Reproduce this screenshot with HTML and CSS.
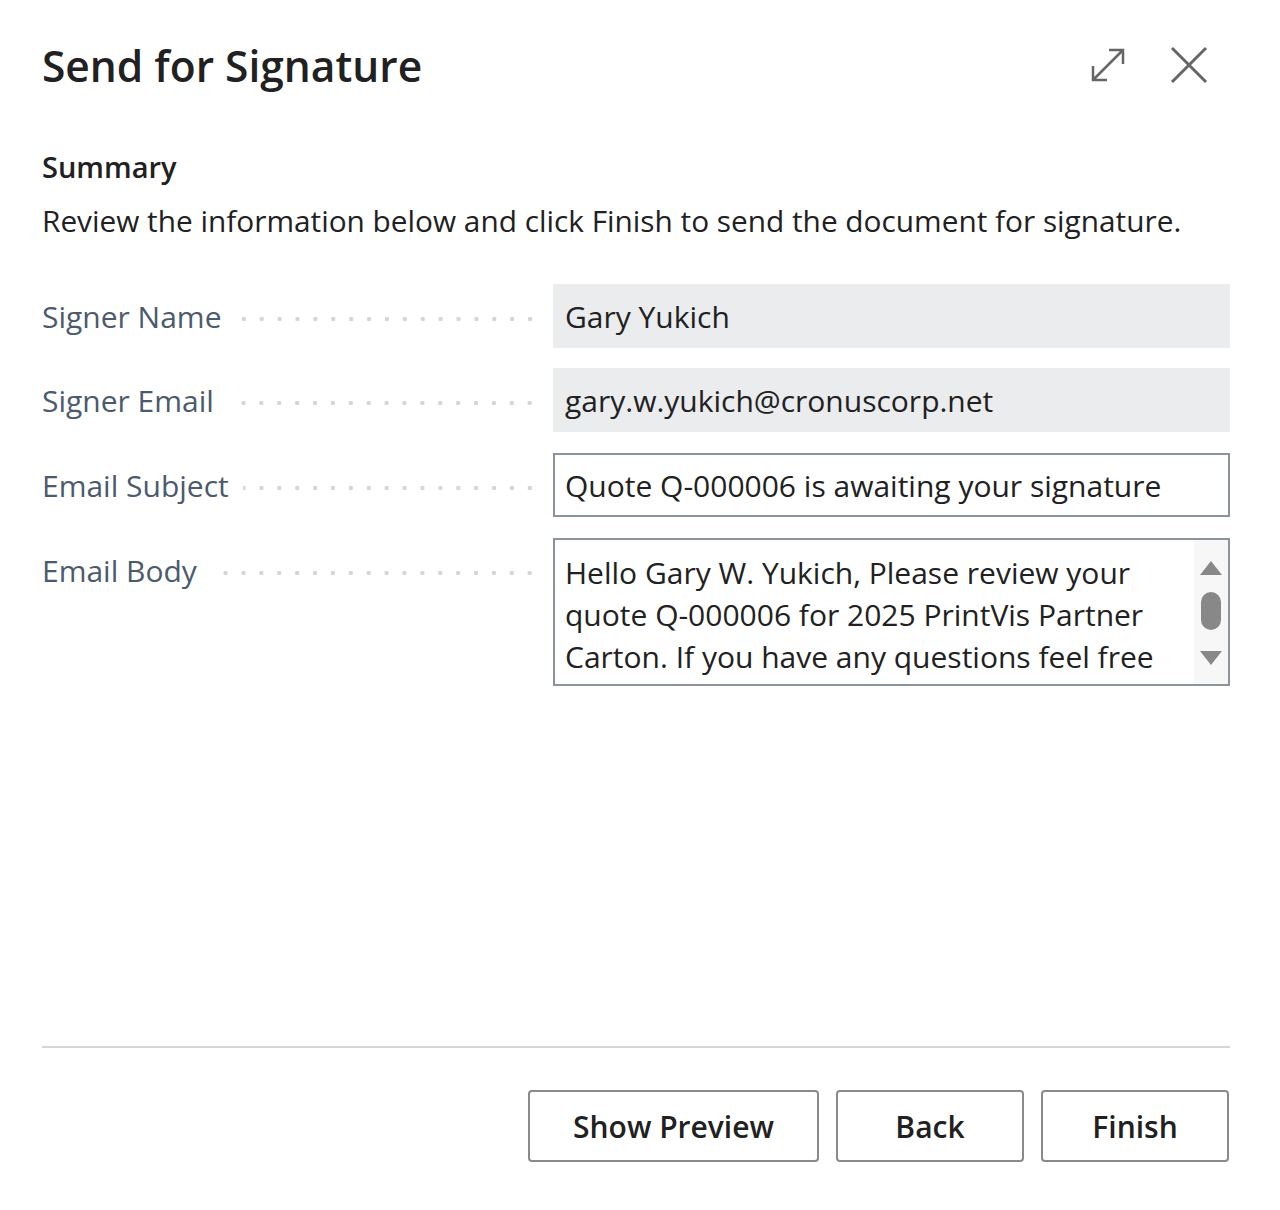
FILE: index.html
```html
<!DOCTYPE html>
<html lang="en">
<head>
<meta charset="utf-8">
<title>Send for Signature</title>
<link rel="stylesheet" href="styles.css">
</head>
<body>
<div class="dialog">
  <header class="head">
    <h1 class="title">Send for Signature</h1>
    <div class="head-icons">
      <svg class="ico" width="36" height="36" viewBox="0 0 36 36" aria-hidden="true">
        <path d="M3 33 L33 3 M19 3 H33 V17 M3 19 V33 H17" fill="none" stroke="#666" stroke-width="2.5"/>
      </svg>
      <svg class="ico" width="38" height="38" viewBox="0 0 38 38" aria-hidden="true">
        <path d="M2 2 L36 36 M36 2 L2 36" fill="none" stroke="#666" stroke-width="3"/>
      </svg>
    </div>
  </header>

  <section class="summary">
    <h2 class="sum-title">Summary</h2>
    <p class="sum-desc">Review the information below and click Finish to send the document for signature.</p>
  </section>

  <div class="fields">
    <div class="row">
      <div class="lab"><span class="lab-text">Signer Name</span><span class="dots"></span></div>
      <div class="val ro">Gary Yukich</div>
    </div>
    <div class="row">
      <div class="lab"><span class="lab-text">Signer Email</span><span class="dots"></span></div>
      <div class="val ro">gary.w.yukich@cronuscorp.net</div>
    </div>
    <div class="row row-edit">
      <div class="lab"><span class="lab-text">Email Subject</span><span class="dots"></span></div>
      <div class="val ed">Quote Q-000006 is awaiting your signature</div>
    </div>
    <div class="row row-edit">
      <div class="lab"><span class="lab-text">Email Body</span><span class="dots"></span></div>
      <div class="val ed area">
        <div class="area-text">Hello Gary W. Yukich, Please review your quote Q-000006 for 2025 PrintVis Partner Carton. If you have any questions feel free</div>
        <div class="sb">
          <span class="sb-up"></span>
          <span class="sb-thumb"></span>
          <span class="sb-down"></span>
        </div>
      </div>
    </div>
  </div>

  <footer class="foot">
    <button class="btn btn-preview">Show Preview</button>
    <button class="btn btn-back">Back</button>
    <button class="btn btn-finish">Finish</button>
  </footer>
</div>
</body>
</html>
```

FILE: styles.css
```css
* { box-sizing: border-box; }
html, body { margin: 0; padding: 0; background: #fff; }
body {
  font-family: "Open Sans", "Noto Sans", "Liberation Sans", sans-serif;
  color: #212121;
  width: 1280px;
  height: 1210px;
}
.dialog {
  padding: 0 50px 0 42px;
  height: 1210px;
  display: flex;
  flex-direction: column;
}
.head {
  display: flex;
  align-items: center;
  justify-content: space-between;
  height: 132px;
  margin-bottom: 15px;
}
.title {
  margin: 0;
  font-size: 42.5px;
  font-weight: 600;
  color: #212121;
  position: relative;
  top: -1px;
}
.head-icons {
  display: flex;
  align-items: center;
  gap: 44px;
  margin-right: 22px;
  margin-top: -2px;
}
.ico { display: block; }
.summary { margin: 0; }
.sum-title {
  margin: 0;
  font-size: 29px;
  font-weight: 600;
  line-height: 40px;
}
.sum-desc {
  margin: 14px 0 0;
  font-size: 29.8px;
  line-height: 40px;
  color: #212121;
}
.fields {
  margin-top: 43px;
  display: flex;
  flex-direction: column;
  gap: 20px;
}
.row {
  display: grid;
  grid-template-columns: 511px 1fr;
  align-items: start;
}
.row-edit { margin-top: 1px; }
.lab {
  display: flex;
  align-items: center;
  height: 64px;
  padding-right: 14px;
}
.lab-text {
  font-size: 30px;
  color: #4b5a6c;
  white-space: nowrap;
}
.dots {
  flex: 1;
  height: 8px;
  margin-left: 14.5px;
  margin-top: 6px;
  background-image: radial-gradient(circle, #d2d5da 2px, transparent 2.4px);
  background-size: 17.9px 8px;
  background-repeat: repeat-x;
  background-position: right center;
}
.val {
  height: 64px;
  font-size: 30px;
  color: #212121;
  padding: 0 12px;
  display: flex;
  align-items: center;
  white-space: nowrap;
}
.ro { background: #ebecee; }
.ed { border: 2px solid #8b939c; padding-left: 10px; }
.area {
  height: 148px;
  align-items: stretch;
  padding: 0 0 0 10px;
}
.area-text {
  flex: 1;
  white-space: normal;
  line-height: 42px;
  padding-top: 12px;
  padding-right: 20px;
  overflow: hidden;
}
.sb {
  width: 34px;
  background: #f7f7f7;
  position: relative;
}
.sb-up, .sb-down {
  position: absolute;
  left: 6px;
  width: 0;
  height: 0;
  border-left: 11px solid transparent;
  border-right: 11px solid transparent;
}
.sb-up { top: 21px; border-bottom: 14px solid #888; }
.sb-down { top: 111px; border-top: 14px solid #888; }
.sb-thumb {
  position: absolute;
  left: 7px;
  top: 52px;
  width: 20px;
  height: 38px;
  border-radius: 10px;
  background: #888;
}
.foot {
  margin-top: auto;
  margin-bottom: 48px;
  border-top: 2px solid #d6d6d6;
  padding-top: 42px;
  display: flex;
  justify-content: flex-end;
  gap: 17px;
  padding-right: 1px;
}
.btn {
  font-family: inherit;
  height: 72px;
  background: #fff;
  border: 2px solid #8a8a8a;
  border-radius: 4px;
  font-size: 30px;
  font-weight: 600;
  color: #212121;
  cursor: pointer;
}
.btn-preview { width: 291px; }
.btn-back { width: 188px; }
.btn-finish { width: 188px; }
```
